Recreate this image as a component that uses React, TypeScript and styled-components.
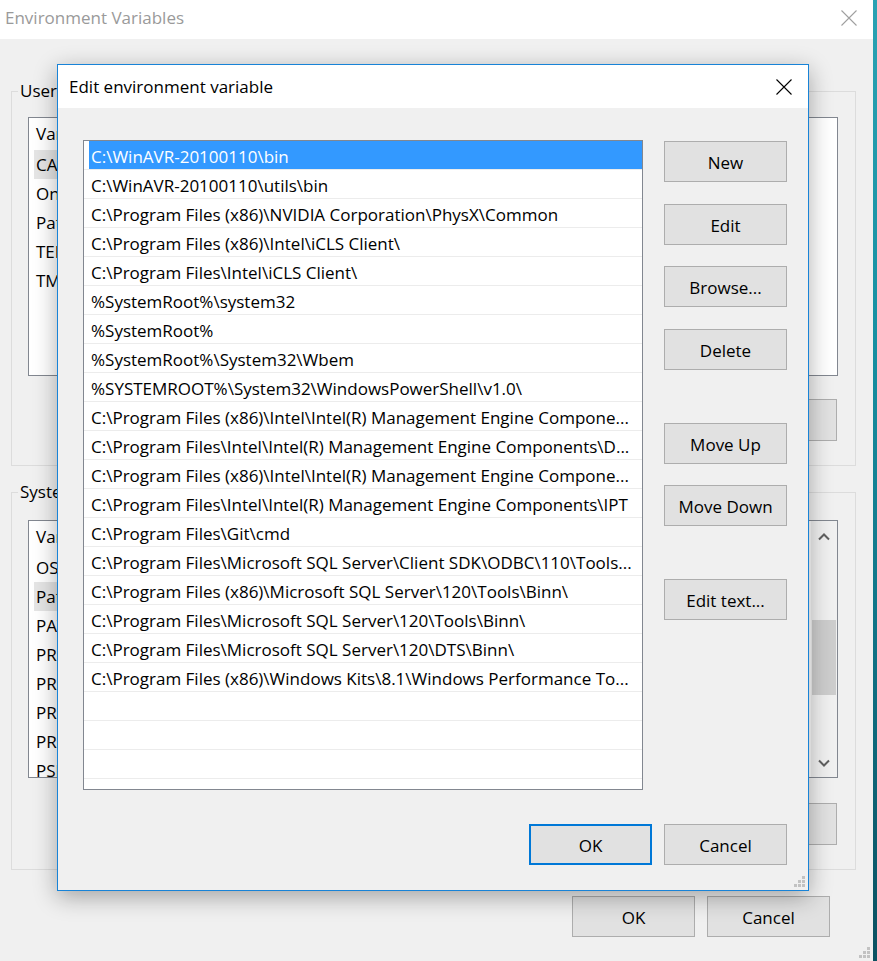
import styled, { createGlobalStyle } from "styled-components";

const FONT = `"Open Sans", "Noto Sans", "Liberation Sans", sans-serif`;

const GlobalStyle = createGlobalStyle`
  html, body {
    margin: 0;
    padding: 0;
  }
  body {
    width: 877px;
    height: 961px;
    overflow: hidden;
    background: linear-gradient(180deg, #2aa2b3 0%, #1790a2 35%, #0f6f82 70%, #0a5060 100%);
    font-family: ${FONT};
    font-size: 17px;
    color: #000;
  }
  * {
    box-sizing: border-box;
  }
`;

const Window = styled.div`
  position: relative;
  width: 873px;
  height: 961px;
  background: #f0f0f0;
  display: flex;
  flex-direction: column;
`;

const TitleBar = styled.div<{ $height: number; $padLeft: number; $lift?: number }>`
  height: ${(p) => p.$height}px;
  flex-shrink: 0;
  background: #ffffff;
  display: flex;
  align-items: center;
  justify-content: space-between;
  padding: 0 16px ${(p) => p.$lift ?? 0}px ${(p) => p.$padLeft}px;
`;

const TitleText = styled.span<{ $inactive?: boolean }>`
  font-size: 17px;
  line-height: 22px;
  color: ${(p) => (p.$inactive ? "#9a9a9a" : "#000")};
`;

const Content = styled.div`
  display: flex;
  flex-direction: column;
  padding: 0 17px 0 11px;
`;

const Group = styled.fieldset<{ $top: number; $padTop: number }>`
  margin: ${(p) => p.$top}px 0 0 0;
  padding: ${(p) => p.$padTop}px 17px 24px 16px;
  border: 1px solid #dcdcdc;
  min-width: 0;
`;

const Legend = styled.legend`
  margin-left: -10px;
  padding: 0 2px;
  font-size: 17px;
  line-height: 20px;
`;

const ListBox = styled.div<{ $height: number }>`
  height: ${(p) => p.$height}px;
  background: #ffffff;
  border: 1px solid #828790;
  display: flex;
  overflow: hidden;
`;

const ListRows = styled.div`
  flex: 1;
  min-width: 0;
  display: flex;
  flex-direction: column;
`;

const HeaderRow = styled.div`
  height: 32px;
  flex-shrink: 0;
  padding-left: 7px;
  line-height: 32px;
  white-space: nowrap;
`;

const VarRow = styled.div`
  height: 29px;
  flex-shrink: 0;
  padding-left: 5px;
  display: flex;
`;

const VarCell = styled.div<{ $selected?: boolean }>`
  width: 260px;
  padding-left: 2px;
  line-height: 29px;
  white-space: nowrap;
  overflow: hidden;
  background: ${(p) => (p.$selected ? "#e5e5e5" : "transparent")};
`;

const ScrollBar = styled.div`
  width: 26px;
  flex-shrink: 0;
  background: #f0f0f0;
  display: flex;
  flex-direction: column;
  align-items: center;
  padding: 12px 0 10px;
`;

const ScrollThumb = styled.div`
  width: 24px;
  height: 75px;
  margin-top: 79px;
  background: #cdcdcd;
`;

const ScrollSpacer = styled.div`
  flex: 1;
`;

const ButtonRow = styled.div<{ $top: number }>`
  display: flex;
  justify-content: flex-end;
  gap: 13px;
  margin-top: ${(p) => p.$top}px;
  padding-right: 1px;
`;

const Button = styled.button<{ $primary?: boolean; $height?: number; $gap?: number }>`
  width: 123px;
  height: ${(p) => p.$height ?? 41}px;
  margin-top: ${(p) => p.$gap ?? 0}px;
  flex-shrink: 0;
  padding: 1px 0 0;
  background: #e1e1e1;
  border: ${(p) => (p.$primary ? "2px solid #0078d7" : "1px solid #adadad")};
  font-family: ${FONT};
  font-size: 17px;
  color: #000;
  cursor: default;
`;

const Footer = styled.div<{ $top: number; $padRight: number }>`
  display: flex;
  justify-content: flex-end;
  gap: 12px;
  margin-top: ${(p) => p.$top}px;
  padding-right: ${(p) => p.$padRight}px;
`;

const Grip = styled.svg<{ $right: number; $bottom: number }>`
  position: absolute;
  right: ${(p) => p.$right}px;
  bottom: ${(p) => p.$bottom}px;
`;

/* ---- foreground dialog ---- */

const Dialog = styled.div`
  position: absolute;
  left: 57px;
  top: 64px;
  width: 752px;
  height: 827px;
  border: 1px solid #1883d7;
  background: #f0f0f0;
  display: flex;
  flex-direction: column;
  box-shadow: 0 6px 22px rgba(0, 0, 0, 0.32);
`;

const DialogBody = styled.div`
  flex: 1;
  display: flex;
  flex-direction: column;
  padding: 32px 21px 25px 25px;
`;

const MainRow = styled.div`
  display: flex;
  gap: 21px;
  align-items: flex-start;
`;

const PathList = styled.div`
  width: 560px;
  height: 650px;
  background: #ffffff;
  border: 1px solid #828790;
  overflow: hidden;
`;

const PathRow = styled.div`
  height: 29px;
  padding-left: 5px;
  border-bottom: 1px solid #ececec;
  display: flex;
`;

const PathText = styled.div<{ $selected?: boolean }>`
  flex: 1;
  padding: 4px 0 0 2px;
  line-height: 24px;
  white-space: nowrap;
  overflow: hidden;
  background: ${(p) => (p.$selected ? "#3399ff" : "transparent")};
  color: ${(p) => (p.$selected ? "#ffffff" : "#000")};
`;

const ButtonColumn = styled.div`
  display: flex;
  flex-direction: column;
  margin-top: 1px;
`;

const DialogFooter = styled.div`
  margin-top: auto;
  display: flex;
  justify-content: flex-end;
  gap: 12px;
`;

const CloseIcon = ({ color }: { color: string }) => (
  <svg width="16" height="16" viewBox="0 0 16 16">
    <path d="M0.5 0.5 L15.5 15.5 M15.5 0.5 L0.5 15.5" stroke={color} strokeWidth="1.1" fill="none" />
  </svg>
);

const Chevron = ({ down }: { down?: boolean }) => (
  <svg width="12" height="8" viewBox="0 0 12 8">
    <polyline
      points={down ? "1,1.5 6,6.5 11,1.5" : "1,6.5 6,1.5 11,6.5"}
      stroke="#606060"
      strokeWidth="2"
      fill="none"
    />
  </svg>
);

const GripDots = ({ right, bottom }: { right: number; bottom: number }) => (
  <Grip $right={right} $bottom={bottom} width="12" height="12" viewBox="0 0 12 12">
    <g fill="#c2c2c2">
      <rect x="8" y="0" width="3" height="3" />
      <rect x="4" y="4" width="3" height="3" />
      <rect x="8" y="4" width="3" height="3" />
      <rect x="0" y="8" width="3" height="3" />
      <rect x="4" y="8" width="3" height="3" />
      <rect x="8" y="8" width="3" height="3" />
    </g>
  </Grip>
);

const userVars = ["CATALINA_HOME", "OneDrive", "Path", "TEMP", "TMP"];
const systemVars = [
  "OS",
  "Path",
  "PATHEXT",
  "PROCESSOR_ARCHITECTURE",
  "PROCESSOR_IDENTIFIER",
  "PROCESSOR_LEVEL",
  "PROCESSOR_REVISION",
  "PSModulePath",
];

const paths = [
  "C:\\WinAVR-20100110\\bin",
  "C:\\WinAVR-20100110\\utils\\bin",
  "C:\\Program Files (x86)\\NVIDIA Corporation\\PhysX\\Common",
  "C:\\Program Files (x86)\\Intel\\iCLS Client\\",
  "C:\\Program Files\\Intel\\iCLS Client\\",
  "%SystemRoot%\\system32",
  "%SystemRoot%",
  "%SystemRoot%\\System32\\Wbem",
  "%SYSTEMROOT%\\System32\\WindowsPowerShell\\v1.0\\",
  "C:\\Program Files (x86)\\Intel\\Intel(R) Management Engine Compone...",
  "C:\\Program Files\\Intel\\Intel(R) Management Engine Components\\D...",
  "C:\\Program Files (x86)\\Intel\\Intel(R) Management Engine Compone...",
  "C:\\Program Files\\Intel\\Intel(R) Management Engine Components\\IPT",
  "C:\\Program Files\\Git\\cmd",
  "C:\\Program Files\\Microsoft SQL Server\\Client SDK\\ODBC\\110\\Tools...",
  "C:\\Program Files (x86)\\Microsoft SQL Server\\120\\Tools\\Binn\\",
  "C:\\Program Files\\Microsoft SQL Server\\120\\Tools\\Binn\\",
  "C:\\Program Files\\Microsoft SQL Server\\120\\DTS\\Binn\\",
  "C:\\Program Files (x86)\\Windows Kits\\8.1\\Windows Performance To...",
  "",
  "",
  "",
  "",
];

const sideButtons = [
  { label: "New", gap: 0 },
  { label: "Edit", gap: 22 },
  { label: "Browse...", gap: 21 },
  { label: "Delete", gap: 22 },
  { label: "Move Up", gap: 53 },
  { label: "Move Down", gap: 21 },
  { label: "Edit text...", gap: 53 },
];

export default function App() {
  return (
    <>
      <GlobalStyle />
      <Window>
        <TitleBar $height={39} $padLeft={5} $lift={3}>
          <TitleText $inactive>Environment Variables</TitleText>
          <CloseIcon color="#a0a0a0" />
        </TitleBar>

        <Content>
          <Group $top={42} $padTop={16}>
            <Legend>User variables for User</Legend>
            <ListBox $height={259}>
              <ListRows>
                <HeaderRow>Variable</HeaderRow>
                {userVars.map((v, i) => (
                  <VarRow key={v}>
                    <VarCell $selected={i === 0}>{v}</VarCell>
                  </VarRow>
                ))}
              </ListRows>
            </ListBox>
            <ButtonRow $top={23}>
              <Button $height={42}>New...</Button>
              <Button $height={42}>Edit...</Button>
              <Button $height={42}>Delete</Button>
            </ButtonRow>
          </Group>

          <Group $top={16} $padTop={18}>
            <Legend>System variables</Legend>
            <ListBox $height={258}>
              <ListRows>
                <HeaderRow>Variable</HeaderRow>
                {systemVars.map((v, i) => (
                  <VarRow key={v}>
                    <VarCell $selected={i === 1}>{v}</VarCell>
                  </VarRow>
                ))}
              </ListRows>
              <ScrollBar>
                <Chevron />
                <ScrollThumb />
                <ScrollSpacer />
                <Chevron down />
              </ScrollBar>
            </ListBox>
            <ButtonRow $top={25}>
              <Button $height={42}>New...</Button>
              <Button $height={42}>Edit...</Button>
              <Button $height={42}>Delete</Button>
            </ButtonRow>
          </Group>

          <Footer $top={26} $padRight={26}>
            <Button>OK</Button>
            <Button>Cancel</Button>
          </Footer>
        </Content>

        <GripDots right={2} bottom={2} />

        <Dialog>
          <TitleBar $height={43} $padLeft={11}>
            <TitleText>Edit environment variable</TitleText>
            <CloseIcon color="#000" />
          </TitleBar>
          <DialogBody>
            <MainRow>
              <PathList>
                {paths.map((p, i) => (
                  <PathRow key={i}>
                    <PathText $selected={i === 0}>{p}</PathText>
                  </PathRow>
                ))}
              </PathList>
              <ButtonColumn>
                {sideButtons.map((b) => (
                  <Button key={b.label} $gap={b.gap}>
                    {b.label}
                  </Button>
                ))}
              </ButtonColumn>
            </MainRow>
            <DialogFooter>
              <Button $primary>OK</Button>
              <Button>Cancel</Button>
            </DialogFooter>
          </DialogBody>
          <GripDots right={2} bottom={2} />
        </Dialog>
      </Window>
    </>
  );
}
